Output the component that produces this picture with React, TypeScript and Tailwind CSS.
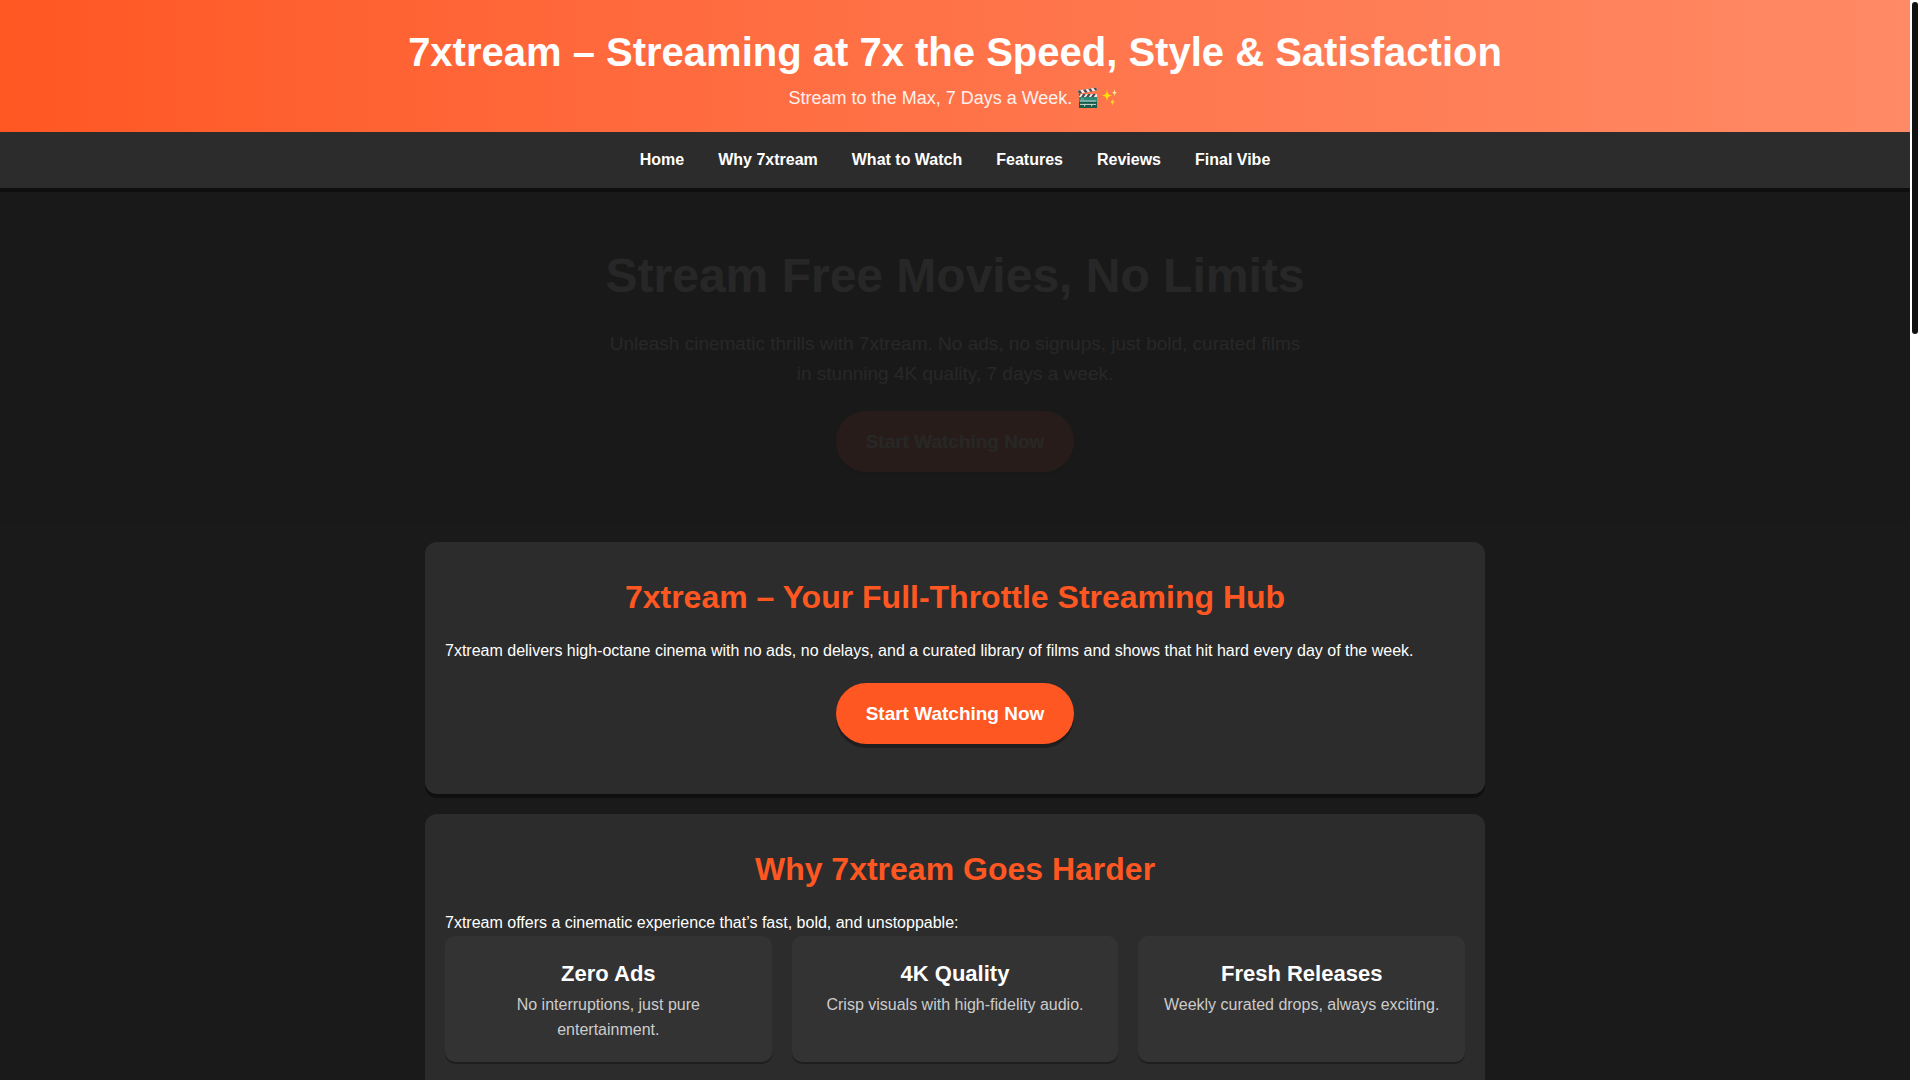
import type { ReactNode } from "react";

const navLinks = [
  { label: "Home", href: "#home" },
  { label: "Why 7xtream", href: "#why" },
  { label: "What to Watch", href: "#watch" },
  { label: "Features", href: "#features" },
  { label: "Reviews", href: "#reviews" },
  { label: "Final Vibe", href: "#final" },
];

const perks = [
  { title: "Zero Ads", text: "No interruptions, just pure entertainment." },
  { title: "4K Quality", text: "Crisp visuals with high-fidelity audio." },
  { title: "Fresh Releases", text: "Weekly curated drops, always exciting." },
];

function ClapperIcon() {
  return (
    <svg viewBox="0 0 22 22" className="inline-block size-[22px] align-[-5px]" role="img" aria-label="Clapper board">
      <path d="M1 3.6 19.4.4l.6 3L1.6 6.8z" fill="#f5f5f5" />
      <path d="M1 3.6l2.2-.4 2 3-3.6.6zM6 2.7l2.6-.4 2 3-2.6.4zM11.2 1.8l2.6-.4 2 3-2.6.4zM16.4.9l3-.5.6 3-1.6.3z" fill="#37474f" />
      <path d="M2 7h18v14H2z" fill="#005a4e" />
      <path d="M2 9.6h18v5H2z" fill="#158a7c" />
      <path d="M2 7h18v3H2z" fill="#f5f5f5" />
      <path d="M2 7h1.8L2 9.4zM6 7h2.8l-2 3H4zM11 7h2.8l-2 3H9zM16 7h2.8l-2 3H14z" fill="#37474f" />
      <path d="M2.8 14h16.4M7.6 17.4v2M14.6 17.4v2M3 17.4h16" stroke="#e0f2f1" strokeWidth=".9" fill="none" />
      <path d="M4 12h3" stroke="#80cbc4" strokeWidth=".8" />
    </svg>
  );
}

function SparklesIcon() {
  return (
    <svg viewBox="0 0 22 22" className="inline-block size-[22px] align-[-5px]" role="img" aria-label="Sparkles">
      <path d="M8 2.500c.5 4.500 1.500 5.500 5.500 6-4 .5-5 1.500-5.500 6-.5-4.500-1.500-5.500-5.500-6 4-.5 5-1.500 5.500-6z" fill="#ffeb00" />
      <path d="M15.500 2c.3 2.600.8 3.400 2.800 3.700-2 .3-2.500 1.100-2.800 3.700-.3-2.600-.8-3.400-2.800-3.700 2-.3 2.500-1.100 2.800-3.700z" fill="#fff3a0" />
      <path d="M13.500 11.500c.3 2.600 1 3.200 3 3.500-2 .3-2.700 1-3 4-.3-3-1-3.700-3-4 2-.3 2.700-.9 3-3.500z" fill="#fdd835" />
    </svg>
  );
}

function WatchButton() {
  return (
    <a
      href="#watch"
      className="inline-block rounded-full bg-[#ff5722] px-[30px] py-[15px] text-[19px] leading-[31px] font-bold text-white shadow-[0_4px_0_rgba(0,0,0,0.3)]"
    >
      Start Watching Now
    </a>
  );
}

function Panel({ id, title, children }: { id: string; title: string; children: ReactNode }) {
  return (
    <section
      id={id}
      className="rounded-xl bg-[#2c2c2c] px-5 pt-[30px] pb-[50px] shadow-[0_4px_0_rgba(0,0,0,0.4)]"
    >
      <h2 className="mb-[15px] text-center text-[32px] leading-[51px] font-bold text-[#ff5722]">{title}</h2>
      {children}
    </section>
  );
}

export default function App() {
  return (
    <div className="flex h-screen overflow-hidden bg-[#1a1a1a] font-['Liberation_Sans',Arial,sans-serif] text-base leading-[26px] text-white">
      <div className="min-w-0 flex-1 overflow-hidden">
        <header className="bg-linear-to-r from-[#ff5722] to-[#ff8a65] p-5 text-center">
          <h1 className="text-[40px] leading-[64px] font-bold">
            7xtream – Streaming at 7x the Speed, Style &amp; Satisfaction
          </h1>
          <p className="text-[18px] leading-[28px] opacity-90">
            Stream to the Max, 7 Days a Week. <ClapperIcon />
            <SparklesIcon />
          </p>
        </header>

        <nav className="relative flex flex-wrap justify-center gap-x-[34px] bg-[#2c2c2c] py-[15px] font-bold shadow-[0_4px_0_rgba(0,0,0,0.4)]">
          {navLinks.map((link) => (
            <a key={link.href} href={link.href}>
              {link.label}
            </a>
          ))}
        </nav>

        <section id="home" className="bg-[#191919] px-5 py-[50px] text-center">
          <div className="mx-auto max-w-[700px] opacity-[0.06]">
            <h2 className="mb-[15px] text-[48px] leading-[76px] font-bold">Stream Free Movies, No Limits</h2>
            <p className="mb-[22px] text-[19px] leading-[30px]">
              Unleash cinematic thrills with 7xtream. No ads, no signups, just bold, curated films in stunning 4K
              quality, 7 days a week.
            </p>
            <WatchButton />
          </div>
        </section>

        <main className="mx-auto flex max-w-[1100px] flex-col gap-5 p-5">
          <Panel id="hub" title="7xtream – Your Full-Throttle Streaming Hub">
            <p className="mb-[19px]">
              7xtream delivers high-octane cinema with no ads, no delays, and a curated library of films and shows
              that hit hard every day of the week.
            </p>
            <div className="flex justify-center">
              <WatchButton />
            </div>
          </Panel>

          <Panel id="why" title="Why 7xtream Goes Harder">
            <p>7xtream offers a cinematic experience that’s fast, bold, and unstoppable:</p>
            <div className="grid grid-cols-3 gap-5">
              {perks.map((perk) => (
                <article
                  key={perk.title}
                  className="rounded-[10px] bg-[#333333] p-5 text-center shadow-[0_2px_0_rgba(0,0,0,0.3)]"
                >
                  <h3 className="text-[22px] leading-[36px] font-bold">{perk.title}</h3>
                  <p className="leading-[25px] text-[#cccccc]">{perk.text}</p>
                </article>
              ))}
            </div>
          </Panel>
        </main>
      </div>

      <div className="w-2.5 shrink-0 bg-white p-0.5" aria-hidden="true">
        <div className="h-[332px] rounded-full bg-[#111111]" />
      </div>
    </div>
  );
}
